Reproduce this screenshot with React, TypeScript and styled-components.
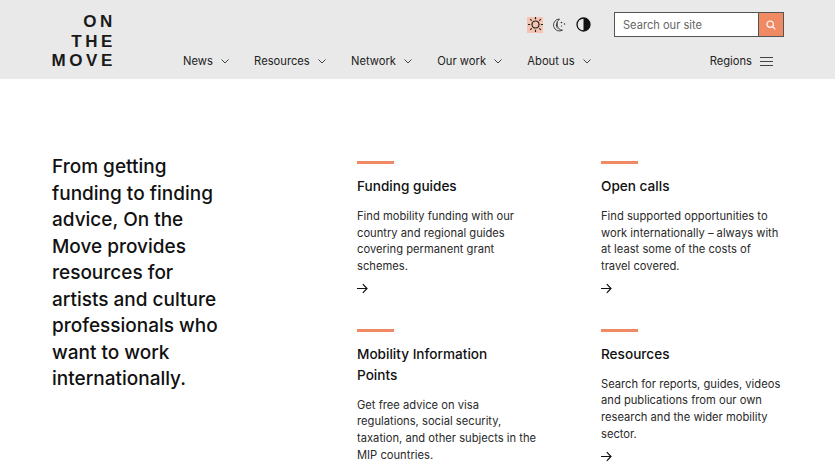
import React from 'react';
import styled, { createGlobalStyle } from 'styled-components';

const Global = createGlobalStyle`
  html, body { margin: 0; padding: 0; background: #fff; overflow: hidden; }
  body { font-family: "Inter", "Liberation Sans", sans-serif; color: #1d1d1d; }
`;

const Header = styled.header`
  height: 79px;
  background: #e9e9e9;
  display: flex;
  padding: 0 51px;
  box-sizing: border-box;
`;

const Logo = styled.div`
  width: 66px;
  margin: 12px 67px 0 -1px;
  font: 700 17px/19.500px "Liberation Sans", sans-serif;
  letter-spacing: 3.600px;
  text-align: right;
  color: #1a1a1a;
  white-space: nowrap;
`;

const HeaderMain = styled.div`
  flex: 1;
  display: flex;
  flex-direction: column;
`;

const TopRow = styled.div`
  display: flex;
  justify-content: flex-end;
  align-items: center;
  height: 25px;
  margin-top: 12px;
`;

const Modes = styled.div`
  display: flex;
  gap: 8px;
  margin-right: 23px;
`;

const ModeButton = styled.button<{ $active?: boolean }>`
  width: 16px;
  height: 16px;
  padding: 0;
  border: 0;
  background: ${(p) => (p.$active ? '#f5c4b2' : 'transparent')};
  display: flex;
  align-items: center;
  justify-content: center;
`;

const SearchBox = styled.form`
  display: flex;
  width: 170px;
  height: 25px;
  box-sizing: border-box;
  border: 1px solid #555;
  background: #fff;
`;

const SearchInput = styled.div`
  flex: 1;
  font-size: 11.100px;
  line-height: 24px;
  padding-left: 8px;
  color: #666;
`;

const SearchButton = styled.div`
  width: 24px;
  background: #f08a65;
  border-left: 1px solid #555;
  display: flex;
  align-items: center;
  justify-content: center;
`;

const NavRow = styled.nav`
  display: flex;
  align-items: center;
  margin-top: 12px;
  height: 24px;
`;

const NavItem = styled.a`
  display: flex;
  align-items: center;
  gap: 8px;
  font-size: 11.200px;
  color: #222;
  margin-right: 25.300px;
`;

const Regions = styled.a`
  margin-left: auto;
  margin-right: 11px;
  display: flex;
  align-items: center;
  gap: 8px;
  font-size: 11.200px;
  color: #222;
`;

const Main = styled.main`
  display: flex;
  padding: 82px 51px 0 52px;
`;

const Intro = styled.p`
  width: 175px;
  flex: none;
  margin: -7px 130px 0 0;
  font-size: 19px;
  line-height: 26.500px;
  font-weight: 500;
  color: #111;
`;

const Cards = styled.div`
  display: grid;
  grid-template-columns: 190px 190px;
  column-gap: 54px;
  row-gap: 33px;
`;

const Card = styled.article``;

const Rule = styled.div`
  width: 37px;
  height: 3px;
  background: #f08a65;
`;

const CardTitle = styled.h3`
  margin: 12px 0 0;
  max-width: 165px;
  font-size: 13.600px;
  line-height: 21px;
  font-weight: 500;
  color: #111;
`;

const CardText = styled.p`
  margin: 11px 0 0;
  width: 181px;
  font-size: 11.200px;
  line-height: 16.600px;
  color: #2a2a2a;
`;

const ArrowLink = styled.a`
  display: block;
  margin-top: 4px;
  height: 17.500px;
`;

const Chevron = () => (
  <svg width="8" height="5" viewBox="0 0 8 5" fill="none" stroke="#444" strokeWidth="1">
    <path d="M.5.5 4 4 7.500.5" />
  </svg>
);

const Arrow = () => (
  <svg width="11" height="11" viewBox="0 0 11 11" fill="none" stroke="#111" strokeWidth="1.2">
    <path d="M0 5.500h10M5.800 1.200 10 5.500 5.800 9.800" />
  </svg>
);

const Sun = () => (
  <svg width="15" height="15" viewBox="0 0 15 15" fill="none" stroke="#222" strokeWidth="1.2">
    <circle cx="7.500" cy="7.500" r="3.500" />
    <path d="M7.500 0v2.200M7.500 12.800V15M0 7.500h2.200M12.800 7.500H15M2.200 2.200l1.500 1.500M11.300 11.300l1.500 1.500M2.200 12.800l1.500-1.500M11.300 3.700l1.500-1.500" />
  </svg>
);

const Moon = () => (
  <svg width="14" height="14" viewBox="0 0 14 14" fill="#222" stroke="#222" strokeWidth=".8">
    <path d="M7.500 1a6 6 0 1 0 3 11.200A6 6 0 0 1 5.200 7 6 6 0 0 1 7.500 1Z" fill="none" />
    <path d="M7.200 1.600A6.500 6.500 0 0 0 3.900 7a6 6 0 0 0 5 5.400A5 5 0 0 1 4.800 7a5 5 0 0 1 2.400-5.400Z" stroke="none" />
    <circle cx="9.500" cy="4.500" r=".8" stroke="none" />
    <circle cx="12.500" cy="6" r=".7" stroke="none" />
    <circle cx="9.500" cy="8" r=".6" stroke="none" />
  </svg>
);

const Contrast = () => (
  <svg width="15" height="15" viewBox="0 0 15 15">
    <circle cx="7.500" cy="7.500" r="6.500" fill="none" stroke="#111" strokeWidth="1.300" />
    <path d="M7.500 1a6.500 6.500 0 0 1 0 13Z" fill="#111" />
  </svg>
);

const SearchIcon = () => (
  <svg width="10" height="10" viewBox="0 0 10 10" fill="none" stroke="#fff" strokeWidth="1.200">
    <circle cx="4.200" cy="4.200" r="3.200" />
    <path d="m6.700 6.700 2.600 2.600" />
  </svg>
);

const Burger = () => (
  <svg width="13" height="9" viewBox="0 0 13 9" fill="none" stroke="#444" strokeWidth="1">
    <path d="M0 .5h13M0 4.500h13M0 8.500h13" />
  </svg>
);

const navItems = ['News', 'Resources', 'Network', 'Our work', 'About us'];

const cards = [
  {
    title: 'Funding guides',
    text: 'Find mobility funding with our country and regional guides covering permanent grant schemes.',
  },
  {
    title: 'Open calls',
    text: 'Find supported opportunities to work internationally – always with at least some of the costs of travel covered.',
  },
  {
    title: 'Mobility Information Points',
    text: 'Get free advice on visa regulations, social security, taxation, and other subjects in the MIP countries.',
  },
  {
    title: 'Resources',
    text: 'Search for reports, guides, videos and publications from our own research and the wider mobility sector.',
  },
];

export default function App() {
  return (
    <>
      <Global />
      <Header>
        <Logo>
          ON
          <br />
          THE
          <br />
          MOVE
        </Logo>
        <HeaderMain>
          <TopRow>
            <Modes>
              <ModeButton $active>
                <Sun />
              </ModeButton>
              <ModeButton>
                <Moon />
              </ModeButton>
              <ModeButton>
                <Contrast />
              </ModeButton>
            </Modes>
            <SearchBox>
              <SearchInput>Search our site</SearchInput>
              <SearchButton>
                <SearchIcon />
              </SearchButton>
            </SearchBox>
          </TopRow>
          <NavRow>
            {navItems.map((item) => (
              <NavItem key={item}>
                {item}
                <Chevron />
              </NavItem>
            ))}
            <Regions>
              Regions
              <Burger />
            </Regions>
          </NavRow>
        </HeaderMain>
      </Header>
      <Main>
        <Intro>
          From getting funding to finding advice, On the Move provides resources for artists and culture
          professionals who want to work internationally.
        </Intro>
        <Cards>
          {cards.map((card) => (
            <Card key={card.title}>
              <Rule />
              <CardTitle>{card.title}</CardTitle>
              <CardText>{card.text}</CardText>
              <ArrowLink>
                <Arrow />
              </ArrowLink>
            </Card>
          ))}
        </Cards>
      </Main>
    </>
  );
}
